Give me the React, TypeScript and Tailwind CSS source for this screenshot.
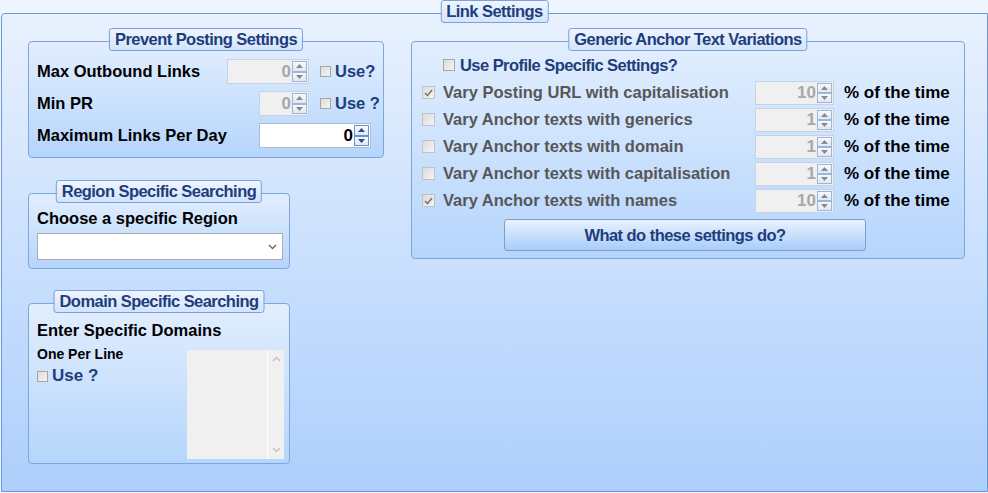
import clsx from 'clsx';
import type { ReactNode } from 'react';

const BLUE = 'text-[#1f3d7b]';

function Legend({ title }: { title: string }) {
  return (
    <div
      className={clsx(
        'absolute left-1/2 top-[-14px] h-[23px] -translate-x-1/2 whitespace-nowrap rounded-[3px] border border-[#7ba2d8] bg-linear-to-b from-[#eef5fe] to-[#d2e4fc] px-[5px] text-[16.5px] leading-[21px] tracking-[-0.55px]',
        BLUE
      )}
    >
      {title}
    </div>
  );
}

function Group({ title, className, children }: { title: string; className?: string; children?: ReactNode }) {
  return (
    <div
      className={clsx(
        'relative rounded-[4px] border border-[#7fa6db] bg-linear-to-b from-[#e2eefe] to-[#b5d5fc]',
        className
      )}
    >
      <Legend title={title} />
      {children}
    </div>
  );
}

function Check({ checked = false, className }: { checked?: boolean; className?: string }) {
  return (
    <span
      className={clsx(
        'flex shrink-0 items-center justify-center border border-[#a6a6a6] bg-linear-to-br from-[#dcdcdc] to-[#f4f4f4]',
        className
      )}
    >
      {checked && (
        <svg width="9" height="8" viewBox="0 0 9 8">
          <path d="M1 4 L3.5 6.5 L8 1" fill="none" stroke="#777" strokeWidth="1.6" />
        </svg>
      )}
    </span>
  );
}

function SpinArrow({ up, enabled }: { up?: boolean; enabled?: boolean }) {
  return (
    <span
      className={clsx(
        'flex flex-1 items-center justify-center border bg-linear-to-b from-[#f6f9fd] to-[#dfe8f4]',
        enabled ? 'border-[#6f90c6]' : 'border-[#9fb5d4]'
      )}
    >
      <svg width="7" height="4" viewBox="0 0 7 4">
        <path d={up ? 'M0 4 L3.5 0 L7 4 Z' : 'M0 0 L3.5 4 L7 0 Z'} fill={enabled ? '#2b4b8c' : '#8a8a8a'} />
      </svg>
    </span>
  );
}

function SpinBox({ value, enabled = false, className }: { value: string; enabled?: boolean; className?: string }) {
  return (
    <div
      className={clsx(
        'flex shrink-0 items-stretch border p-[1px]',
        enabled ? 'border-[#aabdd8] bg-white' : 'border-[#c4d3e7] bg-[#f0f0f0]',
        className
      )}
    >
      <span
        className={clsx(
          'flex-1 self-center pr-[1px] text-right text-[17px] leading-none',
          enabled ? 'text-black' : 'text-[#a8a8a8]'
        )}
      >
        {value}
      </span>
      <div className="flex w-[15px] flex-col">
        <SpinArrow up enabled={enabled} />
        <SpinArrow enabled={enabled} />
      </div>
    </div>
  );
}

const variations = [
  { label: 'Vary Posting URL with capitalisation', value: '10', checked: true },
  { label: 'Vary Anchor texts with generics', value: '1', checked: false },
  { label: 'Vary Anchor texts with domain', value: '1', checked: false },
  { label: 'Vary Anchor texts with capitalisation', value: '1', checked: false },
  { label: 'Vary Anchor texts with names', value: '10', checked: true },
];

export default function App() {
  return (
    <div className="h-[493px] w-[988px] overflow-hidden bg-[#eef5fe] pl-[1px] pt-[13px] font-['Liberation_Sans',Arial,sans-serif] font-bold text-[16.5px] text-black">
      <div className="relative h-[479px] w-[987px] rounded-tl-[4px] border border-[#6b98d5] bg-linear-to-b from-[#e8f1fe] to-[#adcffc]">
        <Legend title="Link Settings" />

        <div className="flex gap-[27px] pl-[26px] pt-[27px]">
          {/* left column */}
          <div className="flex w-[356px] flex-col">
            <Group title="Prevent Posting Settings" className="h-[117px] w-[356px]">
              <div className="flex flex-col gap-[7px] pl-[8px] pr-[12px] pt-[17px]">
                <div className="flex h-[25px] items-center">
                  <span className="flex-1">Max Outbound Links</span>
                  <SpinBox value="0" className="h-[25px] w-[82px]" />
                  <div className="flex w-[62px] items-center whitespace-nowrap pl-[11px]">
                    <Check className="h-[11px] w-[11px]" />
                    <span className={clsx('ml-[4px]', BLUE)}>Use?</span>
                  </div>
                </div>
                <div className="flex h-[25px] items-center">
                  <span className="flex-1">Min PR</span>
                  <SpinBox value="0" className="h-[25px] w-[50px]" />
                  <div className="flex w-[62px] items-center whitespace-nowrap pl-[11px]">
                    <Check className="h-[11px] w-[11px]" />
                    <span className={clsx('ml-[4px]', BLUE)}>Use ?</span>
                  </div>
                </div>
                <div className="flex h-[25px] items-center">
                  <span className="flex-1">Maximum Links Per Day</span>
                  <SpinBox value="0" enabled className="h-[25px] w-[112px]" />
                </div>
              </div>
            </Group>

            <Group title="Region Specific Searching" className="mt-[35px] h-[76px] w-[262px]">
              <div className="pl-[8px] pr-[6px] pt-[14px]">
                <div className="h-[20px] leading-[20px]">Choose a specific Region</div>
                <div className="mt-[5px] flex h-[27px] items-center justify-end border border-[#acacac] bg-white pr-[5px]">
                  <svg width="9" height="6" viewBox="0 0 9 6">
                    <path d="M1 1 L4.5 4.5 L8 1" fill="none" stroke="#6b6b6b" strokeWidth="1.5" />
                  </svg>
                </div>
              </div>
            </Group>

            <Group title="Domain Specific Searching" className="mt-[34px] h-[161px] w-[262px]">
              <div className="pl-[8px] pr-[5px] pt-[16px]">
                <div className="h-[20px] leading-[20px]">Enter Specific Domains</div>
                <div className="mt-[6px] flex items-start">
                  <div className="flex flex-1 flex-col">
                    <span className="h-[16px] text-[14px] leading-[16px]">One Per Line</span>
                    <div className="mt-[4px] flex h-[20px] items-center">
                      <Check className="h-[11px] w-[11px]" />
                      <span className={clsx('ml-[4px] text-[17px]', BLUE)}>Use ?</span>
                    </div>
                  </div>
                  <div className="mt-[4px] flex h-[109px] w-[97px] bg-[#f0f0f0]">
                    <div className="flex-1" />
                    <div className="flex w-[17px] flex-col items-center justify-between border-l border-white py-[6px]">
                      <svg width="9" height="6" viewBox="0 0 9 6">
                        <path d="M1 5 L4.5 1.5 L8 5" fill="none" stroke="#c4c4c4" strokeWidth="1.5" />
                      </svg>
                      <svg width="9" height="6" viewBox="0 0 9 6">
                        <path d="M1 1 L4.5 4.5 L8 1" fill="none" stroke="#c4c4c4" strokeWidth="1.5" />
                      </svg>
                    </div>
                  </div>
                </div>
              </div>
            </Group>
          </div>

          {/* right column */}
          <Group title="Generic Anchor Text Variations" className="h-[218px] w-[554px]">
            <div className="pl-[10px] pr-[14px] pt-[11px]">
              <div className="flex h-[24px] items-center pl-[21px]">
                <Check className="h-[12px] w-[12px] border-[#8f8f8f]" />
                <span className={clsx('ml-[5px] tracking-[-0.55px]', BLUE)}>Use Profile Specific Settings?</span>
              </div>
              <div className="mt-[2px] flex flex-col">
                {variations.map((v) => (
                  <div key={v.label} className="flex h-[27px] items-center">
                    <Check checked={v.checked} className="h-[13px] w-[13px] border-[#c2c2c2]" />
                    <span className="ml-[8px] flex-1 text-[#575757]">{v.label}</span>
                    <SpinBox value={v.value} className="h-[24px] w-[79px]" />
                    <span className="ml-[10px] w-[106px] whitespace-nowrap text-[17px]">% of the time</span>
                  </div>
                ))}
              </div>
              <div
                className={clsx(
                  'ml-[82px] mt-[5px] flex h-[32px] w-[362px] items-center justify-center rounded-[3px] border border-[#7c9dcb] bg-linear-to-b from-[#e9f2fe] to-[#a9cdf9] tracking-[-0.55px]',
                  BLUE
                )}
              >
                What do these settings do?
              </div>
            </div>
          </Group>
        </div>
      </div>
    </div>
  );
}
